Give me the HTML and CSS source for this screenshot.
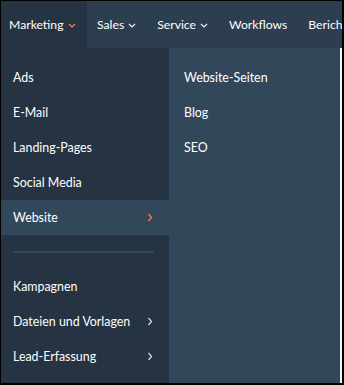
FILE: index.html
```html
<!DOCTYPE html>
<html lang="de">
<head>
<meta charset="utf-8">
<link rel="stylesheet" href="styles.css">
</head>
<body>
<div class="frame">
  <nav class="topnav">
    <div class="nav-item active">Marketing
      <svg class="caret" width="8" height="5" viewBox="0 0 8 5"><path d="M1 1l3 3 3-3" fill="none" stroke="#ff7a59" stroke-width="1.2"/></svg>
    </div>
    <div class="nav-item">Sales
      <svg class="caret" width="8" height="5" viewBox="0 0 8 5"><path d="M1 1l3 3 3-3" fill="none" stroke="#eaf0f6" stroke-width="1.2"/></svg>
    </div>
    <div class="nav-item">Service
      <svg class="caret" width="8" height="5" viewBox="0 0 8 5"><path d="M1 1l3 3 3-3" fill="none" stroke="#eaf0f6" stroke-width="1.2"/></svg>
    </div>
    <div class="nav-item">Workflows</div>
    <div class="nav-item">Berichte</div>
  </nav>
  <div class="dropdown">
    <ul class="menu primary">
      <li class="item">Ads</li>
      <li class="item">E-Mail</li>
      <li class="item">Landing-Pages</li>
      <li class="item">Social Media</li>
      <li class="item selected">Website
        <svg class="chev" width="6" height="9" viewBox="0 0 6 9"><path d="M1.5 1l3 3.5-3 3.5" fill="none" stroke="#ff7a59" stroke-width="1.3"/></svg>
      </li>
      <li class="divider"></li>
      <li class="item">Kampagnen</li>
      <li class="item">Dateien und Vorlagen
        <svg class="chev" width="6" height="9" viewBox="0 0 6 9"><path d="M1.5 1l3 3.5-3 3.5" fill="none" stroke="#cbd6e2" stroke-width="1.3"/></svg>
      </li>
      <li class="item">Lead-Erfassung
        <svg class="chev" width="6" height="9" viewBox="0 0 6 9"><path d="M1.5 1l3 3.5-3 3.5" fill="none" stroke="#cbd6e2" stroke-width="1.3"/></svg>
      </li>
    </ul>
    <ul class="menu secondary">
      <li class="item">Website-Seiten</li>
      <li class="item">Blog</li>
      <li class="item">SEO</li>
    </ul>
    <div class="edge"></div>
  </div>
</div>
</body>
</html>
```

FILE: styles.css
```css
html, body {
  margin: 0;
  padding: 0;
  background: #000;
}
body {
  font-family: Lato, "Noto Sans", sans-serif;
  font-size: 12.4px;
  color: #fff;
}
.frame {
  margin: 1px 2px 2px 1px;
  width: 341px;
  height: 382px;
  background: #33475b;
  display: flex;
  flex-direction: column;
  overflow: hidden;
}
.topnav {
  height: 47px;
  flex: none;
  display: flex;
  align-items: stretch;
  background: #2d3e50;
  white-space: nowrap;
}
.nav-item {
  display: flex;
  align-items: center;
  gap: 4px;
  padding: 0 10.5px;
  font-size: 12.2px;
  color: #fff;
}
.nav-item:first-child {
  padding-left: 8px;
  padding-right: 11px;
}
.nav-item.active {
  background: #253342;
}
.caret {
  margin-top: 2px;
}
.dropdown {
  flex: 1;
  display: flex;
}
.menu {
  list-style: none;
  margin: 0;
  padding: 12px 0 0;
}
.primary {
  width: 168px;
  flex: none;
  background: #253342;
}
.secondary {
  flex: 1;
  background: #33475b;
}
.item {
  height: 35px;
  display: flex;
  align-items: center;
  justify-content: space-between;
  padding: 0 16px 0 12px;
  color: #fff;
}
.secondary .item {
  padding-left: 15px;
}
.item.selected {
  background: #33475b;
}
.divider {
  height: 2px;
  margin: 16px 15px 16px 12px;
  background: #33475b;
}
.edge {
  width: 2px;
  flex: none;
  background: #f5f8fa;
}
```
